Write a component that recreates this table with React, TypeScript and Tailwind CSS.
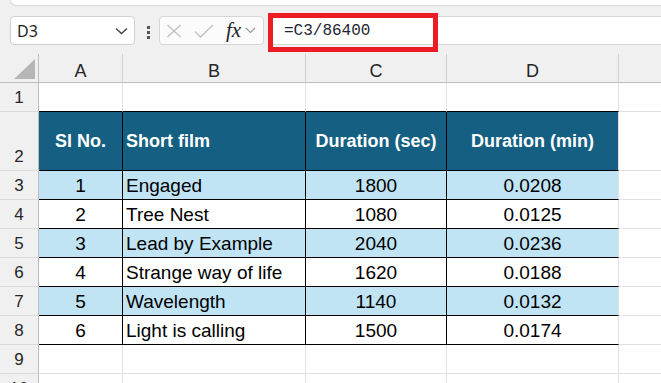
import React from 'react';

type Film = { no: number; title: string; sec: number; min: string };

const films: Film[] = [
  { no: 1, title: 'Engaged', sec: 1800, min: '0.0208' },
  { no: 2, title: 'Tree Nest', sec: 1080, min: '0.0125' },
  { no: 3, title: 'Lead by Example', sec: 2040, min: '0.0236' },
  { no: 4, title: 'Strange way of life', sec: 1620, min: '0.0188' },
  { no: 5, title: 'Wavelength', sec: 1140, min: '0.0132' },
  { no: 6, title: 'Light is calling', sec: 1500, min: '0.0174' },
];

const RowHead: React.FC<{ n: number; tall?: boolean }> = ({ n, tall }) => (
  <div
    className={`w-[39px] shrink-0 bg-[#f0f0f0] border-r border-r-[#bdbdbd] border-b border-b-[#d9d9d9] flex items-end justify-center pb-[5px] text-[17px] leading-none text-[#262626] ${
      tall ? 'h-[59px]' : 'h-[29px]'
    }`}
  >
    {n}
  </div>
);

const EmptyRow: React.FC<{ n: number; tableBelow?: boolean }> = ({ n, tableBelow }) => (
  <div className="flex h-[29px] bg-white">
    <RowHead n={n} />
    <div className={`w-[84px] shrink-0 border-r border-r-[#e1e1e1] border-b ${tableBelow ? 'border-b-black' : 'border-b-[#e1e1e1]'}`} />
    <div className={`w-[183px] shrink-0 border-r border-r-[#e1e1e1] border-b ${tableBelow ? 'border-b-black' : 'border-b-[#e1e1e1]'}`} />
    <div className={`w-[141px] shrink-0 border-r border-r-[#e1e1e1] border-b ${tableBelow ? 'border-b-black' : 'border-b-[#e1e1e1]'}`} />
    <div className={`w-[172px] shrink-0 border-r border-r-[#e1e1e1] border-b ${tableBelow ? 'border-b-black' : 'border-b-[#e1e1e1]'}`} />
    <div className="flex-1 border-b border-b-[#e1e1e1]" />
  </div>
);

export default function App() {
  return (
    <div className="w-[661px] h-[383px] overflow-hidden bg-[#f0f0f0] font-['Liberation_Sans',Arial,sans-serif] text-black select-none">
      {/* ribbon edge */}
      <div className="h-[6px] ml-[10px] bg-white border-b border-l border-[#d6d6d6] rounded-bl-[6px]" />

      {/* formula bar */}
      <div className="h-[48px] flex items-start pt-[10px]">
        <div className="ml-[10px] w-[125px] h-[29px] shrink-0 bg-white border border-[#d1d1d1] rounded-[4px] flex items-center justify-between pl-[6px] pr-[6px]">
          <span className="text-[16px] text-[#1f1f1f] font-['Noto_Sans',sans-serif] leading-none">D3</span>
          <svg width="13" height="8" viewBox="0 0 13 8" fill="none">
            <path d="M1 1.5l5.5 5 5.5-5" stroke="#444" strokeWidth="1.4" />
          </svg>
        </div>
        <div className="ml-[12px] mt-[10px] flex flex-col gap-[2px]">
          <div className="w-[3px] h-[3px] bg-[#555]" />
          <div className="w-[3px] h-[3px] bg-[#555]" />
          <div className="w-[3px] h-[3px] bg-[#555]" />
        </div>
        <div className="ml-[9px] w-[105px] h-[29px] shrink-0 bg-[#fbfbfb] border border-[#d6d6d6] rounded-[4px] flex items-center pl-[6px]">
          <svg width="16" height="14" viewBox="0 0 16 14" fill="none">
            <path d="M1.5 1l13 12M14.5 1l-13 12" stroke="#c2c2c2" strokeWidth="1.4" />
          </svg>
          <svg className="ml-[12px]" width="20" height="14" viewBox="0 0 20 14" fill="none">
            <path d="M1 7.5l5.5 5.5L19 1" stroke="#c2c2c2" strokeWidth="1.4" />
          </svg>
          <span className="ml-[12px] italic font-['Liberation_Serif',serif] text-[21px] leading-none text-[#222]">fx</span>
          <svg className="ml-[4px]" width="11" height="7" viewBox="0 0 11 7" fill="none">
            <path d="M1 1l4.5 4.5L10 1" stroke="#9a9a9a" strokeWidth="1.2" />
          </svg>
        </div>
        <div className="relative ml-[4px] flex-1 h-[29px] bg-white border-y border-[#d6d6d6] flex items-center pl-[16px]">
          <span className="font-['Liberation_Mono',monospace] text-[16px] leading-none text-[#1e2530]">=C3/86400</span>
          <div className="absolute left-0 -top-[4px] w-[170px] h-[39px] border-[5px] border-[#ec1c24]" />
        </div>
      </div>

      {/* column headers */}
      <div className="flex h-[29px] text-[18px] leading-none text-[#262626]">
        <div className="w-[39px] shrink-0 border-r border-r-[#bdbdbd] border-b border-b-[#bdbdbd] flex items-end justify-end pr-[3px] pb-[3px]">
          <svg width="21" height="20" viewBox="0 0 21 20">
            <polygon points="0,20 21,0 21,20" fill="#b6b6b6" />
          </svg>
        </div>
        {['A', 'B', 'C', 'D'].map((c, i) => (
          <div
            key={c}
            className={`${['w-[84px]', 'w-[183px]', 'w-[141px]', 'w-[172px]'][i]} shrink-0 border-r border-r-[#d0d0d0] border-b border-b-[#bdbdbd] flex items-end justify-center pb-[2px]`}
          >
            {c}
          </div>
        ))}
        <div className="flex-1 border-b border-b-[#bdbdbd]" />
      </div>

      <EmptyRow n={1} tableBelow />

      {/* table header */}
      <div className="flex h-[59px] bg-white">
        <RowHead n={2} tall />
        <div className="w-[84px] shrink-0 bg-[#156082] border-r border-b border-black flex items-center justify-center text-white font-bold text-[18px] leading-none">
          Sl No.
        </div>
        <div className="w-[183px] shrink-0 bg-[#156082] border-r border-b border-black flex items-center pl-[3px] text-white font-bold text-[18px] leading-none">
          Short film
        </div>
        <div className="w-[141px] shrink-0 bg-[#156082] border-r border-b border-black flex items-center justify-center text-white font-bold text-[18px] leading-none">
          Duration (sec)
        </div>
        <div className="w-[172px] shrink-0 bg-[#156082] border-r border-r-[#e1e1e1] border-b border-b-black flex items-center justify-center text-white font-bold text-[18px] leading-none">
          Duration (min)
        </div>
        <div className="flex-1 border-b border-b-[#e1e1e1]" />
      </div>

      {films.map((f, i) => {
        const bg = i % 2 === 0 ? 'bg-[#c1e4f5]' : 'bg-white';
        return (
          <div key={f.no} className="flex h-[29px] text-[19px] leading-none bg-white">
            <RowHead n={i + 3} />
            <div className={`w-[84px] shrink-0 ${bg} border-r border-b border-black flex items-end justify-center pb-[4px]`}>{f.no}</div>
            <div className={`w-[183px] shrink-0 ${bg} border-r border-b border-black flex items-end pl-[3px] pb-[4px] whitespace-nowrap`}>{f.title}</div>
            <div className={`w-[141px] shrink-0 ${bg} border-r border-b border-black flex items-end justify-center pb-[4px]`}>{f.sec}</div>
            <div className={`w-[172px] shrink-0 ${bg} border-r border-r-[#e1e1e1] border-b border-b-black flex items-end justify-center pb-[4px]`}>{f.min}</div>
            <div className="flex-1 border-b border-b-[#e1e1e1]" />
          </div>
        );
      })}

      <EmptyRow n={9} />
      <EmptyRow n={10} />
    </div>
  );
}
